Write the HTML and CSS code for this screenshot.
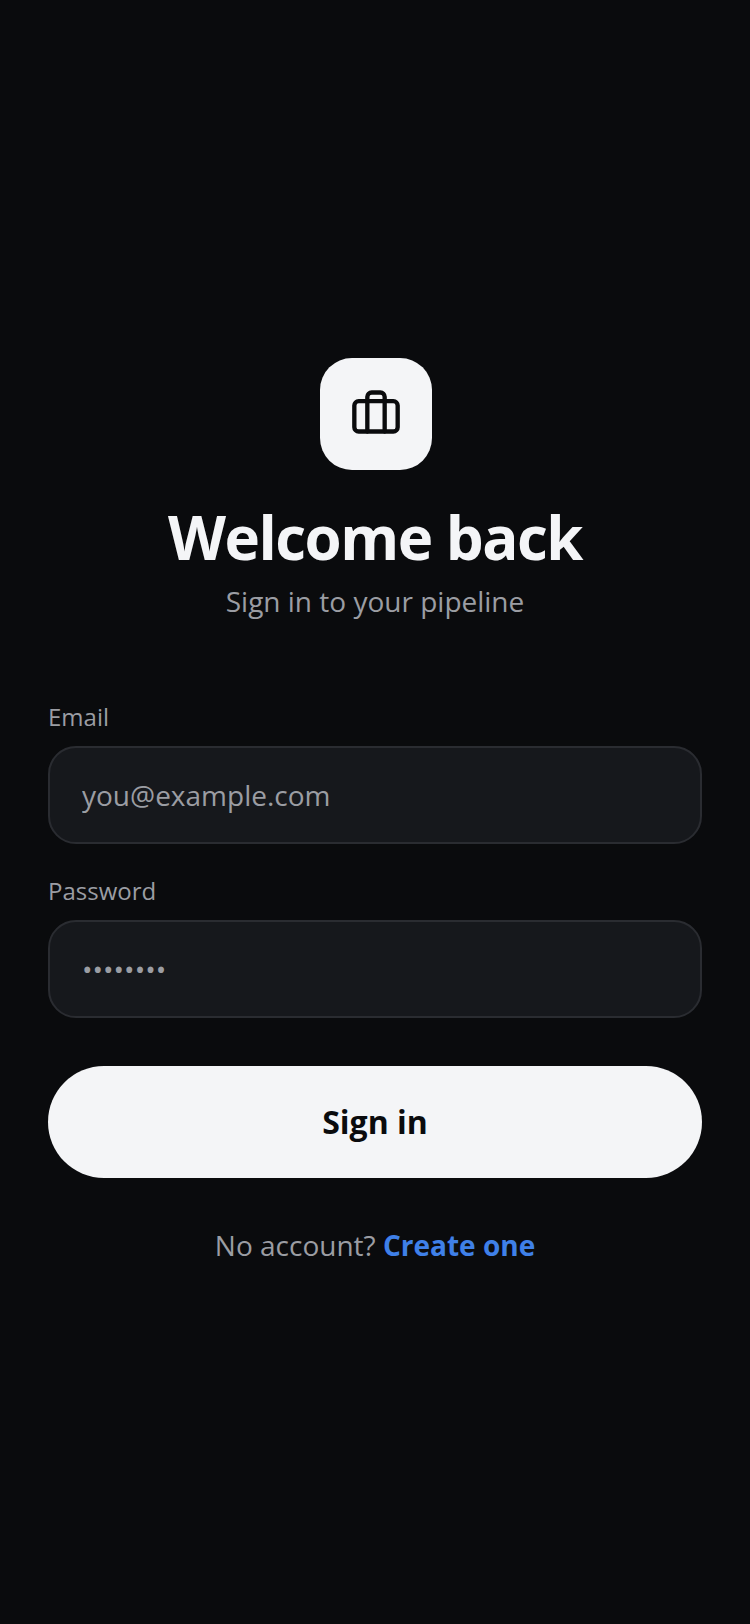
FILE: index.html
```html
<!DOCTYPE html>
<html lang="en">
<head>
    <meta charset="UTF-8">
    <meta name="viewport" content="width=device-width, initial-scale=1.0">
    <title>Sign in</title>
    <link rel="stylesheet" href="styles.css">
</head>
<body>
    <main class="login-page">
        <div class="logo">
            <svg class="logo-icon" viewBox="0 0 24 24" fill="none" stroke="currentColor" stroke-width="2" stroke-linecap="round" stroke-linejoin="round">
                <rect x="2" y="7" width="20" height="14" rx="2"/>
                <path d="M16 21V5a2 2 0 0 0-2-2h-4a2 2 0 0 0-2 2v16"/>
            </svg>
        </div>
        <h1 class="title">Welcome back</h1>
        <p class="subtitle">Sign in to your pipeline</p>

        <form class="login-form">
            <label class="field-label" for="email">Email</label>
            <input class="field-input" id="email" type="text" placeholder="you@example.com">
            <label class="field-label" for="password">Password</label>
            <input class="field-input" id="password" type="password" value="password">
            <button class="submit-button" type="button">Sign in</button>
        </form>

        <p class="signup-text">No account? <a class="signup-link" href="#">Create one</a></p>
    </main>
</body>
</html>
```

FILE: styles.css
```css
* {
    box-sizing: border-box;
    margin: 0;
    padding: 0;
}

body {
    width: 750px;
    height: 1624px;
    overflow: hidden;
    font-family: 'Open Sans', sans-serif;
    background: #0a0b0d;
    color: #f4f5f7;
}

.login-page {
    display: flex;
    flex-direction: column;
    align-items: center;
    padding: 358px 48px 0;
}

.logo {
    display: flex;
    align-items: center;
    justify-content: center;
    width: 112px;
    height: 112px;
    margin-left: 2px;
    border-radius: 32px;
    background: #f4f5f7;
    color: #0a0b0d;
}

.logo-icon {
    width: 52px;
    height: 52px;
    margin-bottom: 4px;
}

.title {
    margin-top: 31px;
    font-size: 60px;
    line-height: 72px;
    font-weight: 700;
    letter-spacing: -1.5px;
}

.subtitle {
    margin-top: 8px;
    font-size: 28px;
    line-height: 40px;
    color: #9b9da3;
}

.login-form {
    display: flex;
    flex-direction: column;
    width: 100%;
    margin-top: 80px;
}

.field-label {
    margin-bottom: 13px;
    font-size: 24px;
    line-height: 32px;
    color: #9b9da3;
}

.field-input {
    width: 100%;
    height: 98px;
    margin-bottom: 31px;
    padding: 0 32px;
    border: 2px solid #2a2c31;
    border-radius: 28px;
    outline: none;
    background: #16181c;
    font-family: inherit;
    font-size: 28px;
    color: #9b9da3;
}

.field-input::placeholder {
    color: #9b9da3;
    opacity: 1;
}

.submit-button {
    height: 112px;
    margin-top: 17px;
    padding-bottom: 2px;
    border: none;
    border-radius: 56px;
    background: #f4f5f7;
    font-family: inherit;
    font-size: 32px;
    font-weight: 700;
    color: #0a0b0d;
}

.signup-text {
    margin-top: 47px;
    font-size: 28px;
    line-height: 40px;
    color: #9b9da3;
}

.signup-link {
    font-weight: 700;
    color: #3f80e8;
    text-decoration: none;
}
```
